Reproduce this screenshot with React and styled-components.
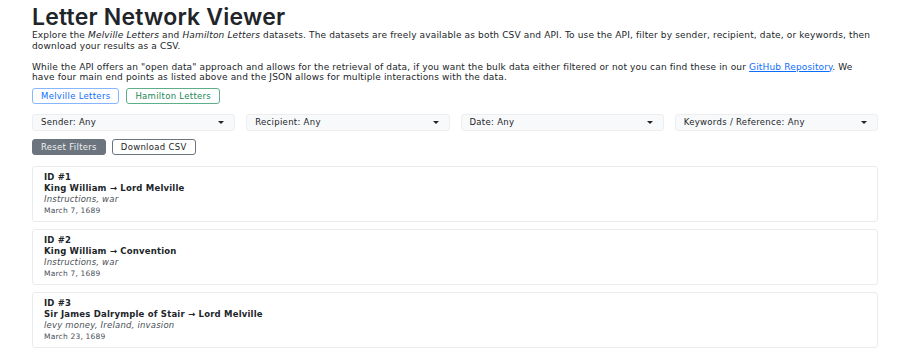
import styled, { createGlobalStyle } from "styled-components";

const Global = createGlobalStyle`
  body {
    margin: 0;
    background: #fff;
    font-family: "DejaVu Sans", "Liberation Sans", sans-serif;
    color: #212529;
  }
`;

const letters = [
    {id: 1, from: "King William", to: "Lord Melville", keywords: "Instructions, war", date: "March 7, 1689"},
    {id: 2, from: "King William", to: "Convention", keywords: "Instructions, war", date: "March 7, 1689"},
    {id: 3, from: "Sir James Dalrymple of Stair", to: "Lord Melville", keywords: "levy money, Ireland, invasion", date: "March 23, 1689"},
];

const filters = ["Sender: Any", "Recipient: Any", "Date: Any", "Keywords / Reference: Any"];

export default function App(){
    return(
        <Page>
            <Global/>
            <Title>Letter Network Viewer</Title>
            <Text>
                Explore the <em>Melville Letters</em> and <em>Hamilton Letters</em> datasets. The datasets are freely available as both CSV and API. To use the API, filter by sender, recipient, date, or keywords, then download your results as a CSV.
            </Text>
            <Text $after={5}>
                While the API offers an "open data" approach and allows for the retrieval of data, if you want the bulk data either filtered or not you can find these in our <a href="#">GitHub Repository</a>. We have four main end points as listed above and the JSON allows for multiple interactions with the data.
            </Text>
            <Row>
                <OutlineButton $color="#0d6efd" $border="#86b7fe">Melville Letters</OutlineButton>
                <OutlineButton $color="#198754" $border="#5fae8a">Hamilton Letters</OutlineButton>
            </Row>
            <Filters>
                {filters.map(f => (
                    <Select key={f}>
                        <span>{f}</span>
                        <Caret/>
                    </Select>
                ))}
            </Filters>
            <Row $gap={6} $after={11}>
                <ResetButton>Reset Filters</ResetButton>
                <OutlineButton $color="#212529" $border="#6c757d">Download CSV</OutlineButton>
            </Row>
            <List>
                {letters.map(l => (
                    <Card key={l.id}>
                        <CardId>ID #{l.id}</CardId>
                        <CardTitle>{l.from} → {l.to}</CardTitle>
                        <Keywords>{l.keywords}</Keywords>
                        <DateLine>{l.date}</DateLine>
                    </Card>
                ))}
            </List>
        </Page>
    )
}

const Page = styled.div`
  width: 846px;
  padding: 4px 0 0 32px;
`;
const Title = styled.h1`
  margin: 0;
  font-family: Inter, "DejaVu Sans", sans-serif;
  font-size: 23px;
  font-weight: 600;
  line-height: 26px;
  letter-spacing: 0.2px;
  color: #212529;
`;
const Text = styled.p`
  margin: 0 0 ${p => p.$after ?? 10.5}px;
  font-size: 9px;
  line-height: 10.5px;
  letter-spacing: 0.15px;
  a { color: #0d6efd; }
`;
const Row = styled.div`
  display: flex;
  gap: ${p => p.$gap ?? 7}px;
  margin-bottom: ${p => p.$after ?? 10}px;
`;
const OutlineButton = styled.button`
  font-family: inherit;
  font-size: 8.5px;
  letter-spacing: 0.3px;
  height: 16px;
  padding: 0 8px;
  background: #fff;
  color: ${p => p.$color};
  border: 1px solid ${p => p.$border};
  border-radius: 3px;
`;
const ResetButton = styled(OutlineButton)`
  background: #6c757d;
  border-color: #6c757d;
  color: #eef0f2;
`;
const Filters = styled.div`
  display: grid;
  grid-template-columns: repeat(4, 1fr);
  gap: 11px;
  margin-bottom: 8px;
`;
const Select = styled.div`
  display: flex;
  box-sizing: border-box;
  align-items: center;
  justify-content: space-between;
  height: 17px;
  padding: 0 10px 0 8px;
  background: #f8f9fa;
  border: 1px solid #eceef0;
  border-radius: 3px;
  font-size: 8.5px;
  letter-spacing: 0.3px;
`;
const Caret = styled.span`
  width: 0;
  height: 0;
  border-left: 3px solid transparent;
  border-right: 3px solid transparent;
  border-top: 3px solid #212529;
`;
const List = styled.div`
  display: flex;
  flex-direction: column;
  gap: 7px;
`;
const Card = styled.div`
  height: 56px;
  box-sizing: border-box;
  padding: 5.5px 11px;
  border: 1px solid #e9ecef;
  border-radius: 3px;
  font-size: 8.5px;
  line-height: 11px;
  letter-spacing: 0.2px;
`;
const CardId = styled.div`
  font-weight: 700;
`;
const CardTitle = styled.div`
  font-weight: 700;
`;
const Keywords = styled.div`
  font-style: italic;
  color: #495057;
`;
const DateLine = styled.div`
  font-size: 7.5px;
  color: #495057;
`;
